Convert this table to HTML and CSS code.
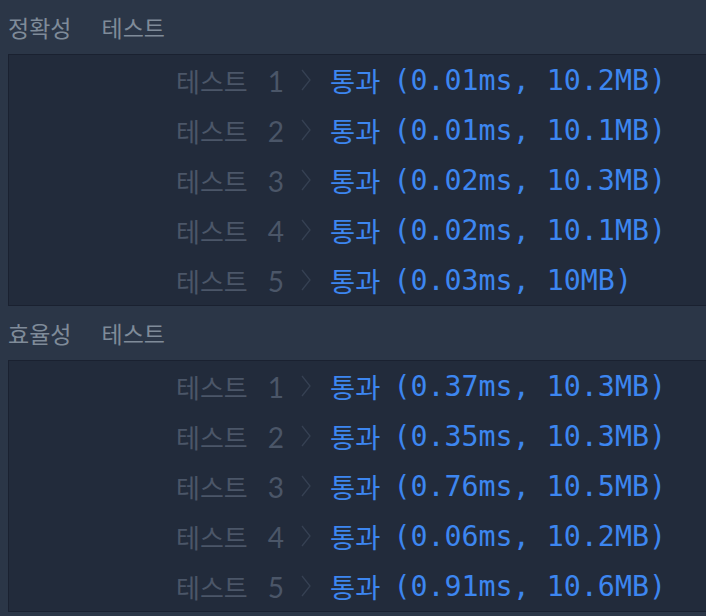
FILE: index.html
```html
<!DOCTYPE html>
<html lang="ko">
<head>
  <meta charset="UTF-8">
  <title>채점 결과</title>
  <link rel="stylesheet" href="styles.css">
</head>
<body>
  <div class="section-title"><span>정확성</span><span>테스트</span></div>
  <div class="results">
    <div class="row"><div class="label">테스트<span class="num">1</span></div><svg class="chev" viewBox="0 0 12 24"><polyline points="2,2 10,12 2,22"/></svg><span class="pass">통과</span><span class="detail">(0.01ms, 10.2MB)</span></div>
    <div class="row"><div class="label">테스트<span class="num">2</span></div><svg class="chev" viewBox="0 0 12 24"><polyline points="2,2 10,12 2,22"/></svg><span class="pass">통과</span><span class="detail">(0.01ms, 10.1MB)</span></div>
    <div class="row"><div class="label">테스트<span class="num">3</span></div><svg class="chev" viewBox="0 0 12 24"><polyline points="2,2 10,12 2,22"/></svg><span class="pass">통과</span><span class="detail">(0.02ms, 10.3MB)</span></div>
    <div class="row"><div class="label">테스트<span class="num">4</span></div><svg class="chev" viewBox="0 0 12 24"><polyline points="2,2 10,12 2,22"/></svg><span class="pass">통과</span><span class="detail">(0.02ms, 10.1MB)</span></div>
    <div class="row"><div class="label">테스트<span class="num">5</span></div><svg class="chev" viewBox="0 0 12 24"><polyline points="2,2 10,12 2,22"/></svg><span class="pass">통과</span><span class="detail">(0.03ms, 10MB)</span></div>
  </div>

  <div class="section-title"><span>효율성</span><span>테스트</span></div>
  <div class="results">
    <div class="row"><div class="label">테스트<span class="num">1</span></div><svg class="chev" viewBox="0 0 12 24"><polyline points="2,2 10,12 2,22"/></svg><span class="pass">통과</span><span class="detail">(0.37ms, 10.3MB)</span></div>
    <div class="row"><div class="label">테스트<span class="num">2</span></div><svg class="chev" viewBox="0 0 12 24"><polyline points="2,2 10,12 2,22"/></svg><span class="pass">통과</span><span class="detail">(0.35ms, 10.3MB)</span></div>
    <div class="row"><div class="label">테스트<span class="num">3</span></div><svg class="chev" viewBox="0 0 12 24"><polyline points="2,2 10,12 2,22"/></svg><span class="pass">통과</span><span class="detail">(0.76ms, 10.5MB)</span></div>
    <div class="row"><div class="label">테스트<span class="num">4</span></div><svg class="chev" viewBox="0 0 12 24"><polyline points="2,2 10,12 2,22"/></svg><span class="pass">통과</span><span class="detail">(0.06ms, 10.2MB)</span></div>
    <div class="row"><div class="label">테스트<span class="num">5</span></div><svg class="chev" viewBox="0 0 12 24"><polyline points="2,2 10,12 2,22"/></svg><span class="pass">통과</span><span class="detail">(0.91ms, 10.6MB)</span></div>
  </div>
</body>
</html>
```

FILE: styles.css
```css
body {
  margin: 0;
  background-color: #2b3647;
  font-family: 'Noto Sans CJK KR', 'Noto Sans', sans-serif;
  overflow: hidden;
}

.section-title {
  height: 54px;
  display: flex;
  align-items: center;
  gap: 30px;
  padding-left: 8px;
  font-size: 23px;
  color: #7f8b99;
}

.results {
  margin-left: 8px;
  background-color: #222b3b;
  border: 1px solid #1a2130;
  border-right: none;
}

.row {
  height: 50px;
  display: flex;
  align-items: center;
}

.label {
  width: 275px;
  text-align: right;
  font-size: 26px;
  color: #4b5668;
}

.label .num {
  margin-left: 20px;
  font-family: 'Lato', sans-serif;
  font-size: 28px;
}

.chev {
  width: 12px;
  height: 26px;
  margin-left: 16px;
  fill: none;
  stroke: #364153;
  stroke-width: 1.3;
}

.pass {
  margin-left: 18px;
  font-size: 27.4px;
  color: #3d86f0;
}

.detail {
  margin-left: 13px;
  font-family: 'DejaVu Sans Mono', monospace;
  font-size: 28.3px;
  color: #3d86f0;
}
```
